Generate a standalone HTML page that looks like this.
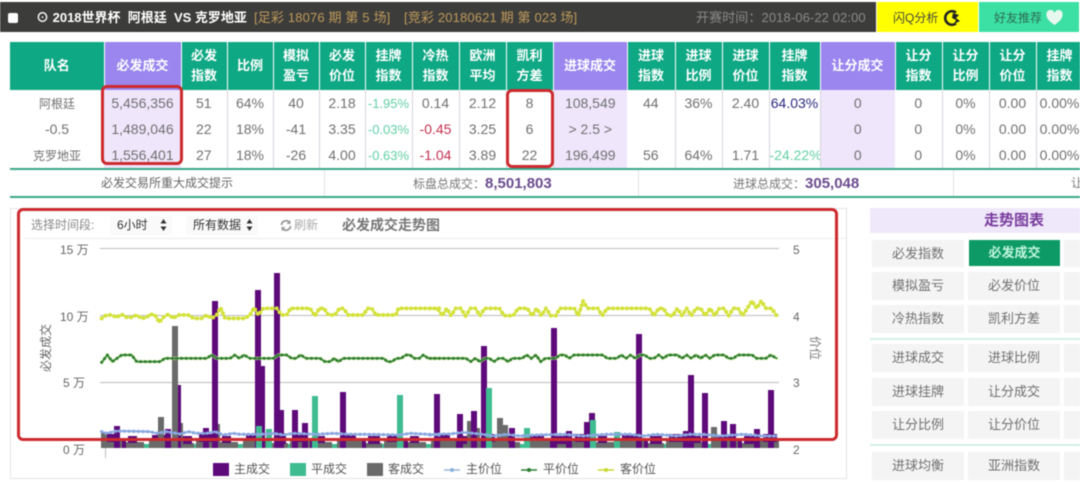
<!DOCTYPE html>
<html><head><meta charset="utf-8">
<style>
html,body{margin:0;padding:0;background:#fff}
#r{position:relative;width:1080px;height:482px;overflow:hidden;background:#fff;font-family:"Liberation Sans","Noto Sans CJK SC",sans-serif;filter:blur(.4px)}
.a{position:absolute;white-space:nowrap}
.b{position:absolute;box-sizing:border-box}
table{position:absolute;left:10px;top:42px;border-collapse:collapse;table-layout:fixed;width:1073px}
th{height:48px;padding:0;background:#0fa884;color:#fff;font-size:13px;line-height:20px;font-weight:bold;border-right:1px solid #fff;text-align:center}
th.p{background:#9a86ee}
td{height:26px;padding:0;font-size:14px;color:#707070;text-align:center;border-right:1px solid #d5d5dd;white-space:nowrap;overflow:hidden}
td.n{border-right:0;font-size:12px}
td.l{background:#efe6fb;border-right:0}
.g{color:#62cfa6;font-size:13px}.d{color:#c33050}.v{color:#2b2a80}
.btn{position:absolute;background:#f4f4f4;color:#707070;font-size:13px;text-align:center;box-sizing:border-box}
.rb{position:absolute;box-sizing:border-box;border:3px solid #cc2a2e;border-radius:6px}
</style></head><body><div id="r">

<!-- top bar -->
<div class="b" style="left:0;top:2px;width:876px;height:30px;background:#3c3c3a"></div>
<div class="b" style="left:8px;top:13px;width:10px;height:10px;background:#fff;border-radius:2px"></div>
<div class="a" style="left:36px;top:9px;font-size:13px;line-height:18px;font-weight:bold;color:#fff">⊙ 2018世界杯&nbsp; 阿根廷&nbsp; VS 克罗地亚</div>
<div class="a" style="left:254px;top:9px;font-size:13px;line-height:18px;color:#bf9a5c;letter-spacing:.15px">[足彩 18076 期 第 5 场]</div>
<div class="a" style="left:404px;top:9px;font-size:13px;line-height:18px;color:#bf9a5c;letter-spacing:.15px">[竞彩 20180621 期 第 023 场]</div>
<div class="a" style="left:696px;top:9px;font-size:13px;line-height:18px;color:#8a8a88;letter-spacing:.1px">开赛时间：2018-06-22 02:00</div>
<div class="b" style="left:877px;top:2px;width:101px;height:30px;background:#ffff00"></div>
<div class="a" style="left:893px;top:9px;font-size:12px;line-height:18px;color:#444">闪Q分析</div>
<svg class="a" style="left:943px;top:9px" width="18" height="18" viewBox="0 0 18 18"><path d="M13 3.500A6.800 6.800 0 1 0 13 14.500" fill="none" stroke="#222" stroke-width="2.600"/><path d="M10 4l6 2-3 3 4 3-6 3 2-4-4-2z" fill="#222"/></svg>
<div class="b" style="left:979px;top:2px;width:100px;height:30px;background:#3ce0a4"></div>
<div class="a" style="left:994px;top:9px;font-size:12px;line-height:18px;color:#2c6b55">好友推荐</div>
<svg class="a" style="left:1046px;top:10px" width="17" height="16" viewBox="0 0 17 16"><path d="M8.500 15C3 11 .5 8.500 .5 5A4 4 0 0 1 8.500 3A4 4 0 0 1 16.500 5C16.500 8.500 14 11 8.500 15z" fill="#e6f8f0"/></svg>

<!-- table -->
<table>
<colgroup><col style="width:94px"><col style="width:77px"><col style="width:46px"><col style="width:46px"><col style="width:46px"><col style="width:46px"><col style="width:47px"><col style="width:47px"><col style="width:47px"><col style="width:47px"><col style="width:74px"><col style="width:48px"><col style="width:47px"><col style="width:47px"><col style="width:51px"><col style="width:75px"><col style="width:47px"><col style="width:47px"><col style="width:47px"><col style="width:47px"></colgroup>
<tr><th>队名</th><th class="p">必发成交</th><th>必发<br>指数</th><th>比例</th><th>模拟<br>盈亏</th><th>必发<br>价位</th><th>挂牌<br>指数</th><th>冷热<br>指数</th><th>欧洲<br>平均</th><th>凯利<br>方差</th><th class="p">进球成交</th><th>进球<br>指数</th><th>进球<br>比例</th><th>进球<br>价位</th><th>挂牌<br>指数</th><th class="p">让分成交</th><th>让分<br>指数</th><th>让分<br>比例</th><th>让分<br>价位</th><th>挂牌<br>指数</th></tr>
<tr><td class="n">阿根廷</td><td class="l">5,456,356</td><td>51</td><td>64%</td><td>40</td><td>2.18</td><td class="g">-1.95%</td><td>0.14</td><td>2.12</td><td>8</td><td class="l">108,549</td><td>44</td><td>36%</td><td>2.40</td><td class="v">64.03%</td><td class="l">0</td><td>0</td><td>0%</td><td>0.00</td><td>0.00%</td></tr>
<tr><td class="n" style="font-size:14px">-0.5</td><td class="l">1,489,046</td><td>22</td><td>18%</td><td>-41</td><td>3.35</td><td class="g">-0.03%</td><td class="d">-0.45</td><td>3.25</td><td>6</td><td class="l">&gt; 2.5 &gt;</td><td></td><td></td><td></td><td></td><td class="l">0</td><td>0</td><td>0%</td><td>0.00</td><td>0.00%</td></tr>
<tr><td class="n">克罗地亚</td><td class="l">1,556,401</td><td>27</td><td>18%</td><td>-26</td><td>4.00</td><td class="g">-0.63%</td><td class="d">-1.04</td><td>3.89</td><td>22</td><td class="l">196,499</td><td>56</td><td>64%</td><td>1.71</td><td class="g" style="font-size:14px">-24.22%</td><td class="l">0</td><td>0</td><td>0%</td><td>0.00</td><td>0.00%</td></tr>
</table>

<!-- summary -->
<div class="b" style="left:10px;top:168px;width:1070px;height:2px;background:#38a888"></div>
<div class="b" style="left:10px;top:196px;width:1070px;height:2px;background:#38a888"></div>
<div class="b" style="left:324px;top:170px;width:1px;height:26px;background:#e2e2e2"></div>
<div class="b" style="left:638px;top:170px;width:1px;height:26px;background:#e2e2e2"></div>
<div class="b" style="left:953px;top:170px;width:1px;height:26px;background:#e2e2e2"></div>
<div class="a" style="left:101px;top:175px;font-size:12px;line-height:17px;color:#666">必发交易所重大成交提示</div>
<div class="a" style="left:413px;top:175px;font-size:12px;line-height:17px;color:#777">标盘总成交：<b style="font-size:15px;color:#6b4c8e">8,501,803</b></div>
<div class="a" style="left:733px;top:175px;font-size:12px;line-height:17px;color:#777">进球总成交：<b style="font-size:15px;color:#6b4c8e">305,048</b></div>
<div class="a" style="left:1071px;top:175px;font-size:12px;line-height:17px;color:#777">让分总成交</div>

<!-- chart panel -->
<div class="b" style="left:10px;top:208px;width:837px;height:271px;border:1px solid #e4e4e4"></div>
<div class="b" style="left:24px;top:238px;width:822px;height:1px;background:#ececec"></div>
<div class="b" style="left:110px;top:216px;width:62px;height:19px;background:#fafafa;border-radius:3px"></div>
<div class="b" style="left:186px;top:216px;width:72px;height:19px;background:#fafafa;border-radius:3px"></div>
<div class="a" style="left:31px;top:217px;font-size:12px;line-height:17px;color:#888">选择时间段:</div>
<div class="a" style="left:117px;top:217px;font-size:12px;line-height:17px;color:#333">6小时</div>
<svg class="a" style="left:160px;top:219px" width="7" height="12" viewBox="0 0 7 12"><path d="M3.500 0L6.500 4.500H.5zM3.500 12L.5 7.500H6.500z" fill="#333"/></svg>
<div class="a" style="left:193px;top:217px;font-size:12px;line-height:17px;color:#333">所有数据</div>
<svg class="a" style="left:246px;top:219px" width="7" height="12" viewBox="0 0 7 12"><path d="M3.500 0L6.500 4.500H.5zM3.500 12L.5 7.500H6.500z" fill="#333"/></svg>
<svg class="a" style="left:280px;top:219px" width="12" height="13" viewBox="0 0 12 13"><path d="M1.500 6a4.500 4.500 0 0 1 8-2.500M10.500 7a4.500 4.500 0 0 1-8 2.500" fill="none" stroke="#999" stroke-width="1.800"/><path d="M10.500 1v4h-4zM1.500 12V8h4z" fill="#999"/></svg>
<div class="a" style="left:294px;top:217px;font-size:12px;line-height:17px;color:#aaa">刷新</div>
<div class="a" style="left:342px;top:216px;font-size:14px;line-height:18px;font-weight:bold;color:#777">必发成交走势图</div>

<div class="a" style="left:60px;top:242px;width:25px;text-align:right;font-size:12px;line-height:17px;color:#666">15 万</div>
<div class="a" style="left:60px;top:309px;width:25px;text-align:right;font-size:12px;line-height:17px;color:#666">10 万</div>
<div class="a" style="left:60px;top:375px;width:25px;text-align:right;font-size:12px;line-height:17px;color:#666">5 万</div>
<div class="a" style="left:60px;top:442px;width:25px;text-align:right;font-size:12px;line-height:17px;color:#666">0 万</div>
<div class="a" style="left:22px;top:340px;width:48px;text-align:center;font-size:12px;line-height:16px;color:#666;transform:rotate(-90deg)">必发成交</div>
<div class="a" style="left:793px;top:242px;font-size:12px;line-height:17px;color:#666">5</div>
<div class="a" style="left:793px;top:309px;font-size:12px;line-height:17px;color:#666">4</div>
<div class="a" style="left:793px;top:375px;font-size:12px;line-height:17px;color:#666">3</div>
<div class="a" style="left:793px;top:442px;font-size:12px;line-height:17px;color:#666">2</div>
<div class="a" style="left:801px;top:340px;width:28px;text-align:center;font-size:12px;line-height:16px;color:#777;transform:rotate(90deg)">价位</div>

<svg class="a" style="left:0;top:0" width="1080" height="482" viewBox="0 0 1080 482">
<defs>
<pattern id="c" x="102" y="430" width="94" height="18" patternUnits="userSpaceOnUse">
<path d="M0 10h20v8H0zM24 12h18v6H24zM47 10h25v8H47zM76 13h16v5H76z" fill="#6a6a6a"/>
<path d="M3 4h14v8H3zM26 6h9v7h-9zM50 5h16v6H50zM78 6h12v8H78zM20 8h4v10h-4zM72 11h4v7h-4z" fill="#5e0a78"/>
<path d="M42 14h5v4h-5zM92 14h2v4h-2z" fill="#3fbc90"/>
</pattern>
</defs>
<g stroke="#bdbdbd" stroke-width="1"><path d="M100 248.500H779M100 315.500H779M100 382.500H779M105.500 448V458" fill="none"/></g>
<rect x="102" y="430" width="677" height="18" fill="url(#c)"/>
<g fill="#6a6a6a">
<rect x="172" y="326" width="6" height="122"/><rect x="158" y="417" width="6" height="31"/><rect x="101" y="433" width="6" height="15"/><rect x="178" y="423" width="5" height="25"/><rect x="214" y="424" width="6" height="24"/>
<rect x="467" y="421" width="8" height="27"/><rect x="475" y="428" width="5" height="20"/><rect x="497" y="418" width="6" height="30"/><rect x="503" y="425" width="5" height="23"/><rect x="711" y="427" width="6" height="21"/>
</g>
<g fill="#5f0a7b">
<rect x="212" y="301" width="6" height="147"/><rect x="255" y="290" width="6" height="158"/><rect x="261" y="366" width="4" height="82"/><rect x="274" y="273" width="6" height="175"/><rect x="280" y="410" width="4" height="38"/><rect x="292" y="410" width="6" height="38"/><rect x="302" y="423" width="6" height="25"/><rect x="340" y="392" width="6" height="56"/><rect x="178" y="385" width="3" height="63"/><rect x="114" y="426" width="6" height="22"/><rect x="165" y="429" width="6" height="19"/><rect x="203" y="428" width="6" height="20"/>
<rect x="434" y="394" width="6" height="54"/><rect x="457" y="414" width="6" height="34"/><rect x="471" y="411" width="6" height="37"/><rect x="481" y="346" width="6" height="102"/><rect x="509" y="428" width="6" height="20"/><rect x="551" y="328" width="6" height="120"/><rect x="566" y="431" width="6" height="17"/><rect x="584" y="422" width="6" height="26"/><rect x="589" y="413" width="6" height="35"/><rect x="636" y="334" width="6" height="114"/><rect x="683" y="431" width="6" height="17"/><rect x="688" y="375" width="6" height="73"/><rect x="702" y="393" width="6" height="55"/><rect x="721" y="421" width="6" height="27"/><rect x="730" y="424" width="6" height="24"/><rect x="754" y="429" width="6" height="19"/><rect x="768" y="390" width="6" height="58"/>
</g>
<g fill="#3fbc90">
<rect x="312" y="396" width="6" height="52"/><rect x="397" y="395" width="6" height="53"/><rect x="256" y="426" width="6" height="22"/><rect x="266" y="429" width="6" height="19"/><rect x="486" y="388" width="6" height="60"/><rect x="524" y="428" width="6" height="20"/><rect x="590" y="420" width="6" height="28"/><rect x="614" y="432" width="6" height="16"/>
</g>
<g fill="none" stroke-linejoin="round" stroke-linecap="round">
<g transform="translate(0,200) scale(.33333)">
<polyline stroke="#c9d92e" stroke-width="5" points="305,355 320,345 335,345 350,352 365,343 380,352 395,352 410,345 425,355 440,352 450,343 465,345 478,367 492,350 505,343 520,355 535,345 565,345 580,355 605,355 620,345 635,355 650,345 662,323 675,355 735,355 750,345 762,323 775,345 790,325 830,325 845,345 860,345 872,325 930,325 945,348 958,325 972,325 985,345 1005,345 1018,325 1030,325 1045,345 1090,345 1103,325 1115,325 1128,345 1188,345 1195,325 1320,325"/>
<polyline stroke="#d4e23a" stroke-width="12" stroke-dasharray="0 14" points="305,355 320,345 335,345 350,352 365,343 380,352 395,352 410,345 425,355 440,352 450,343 465,345 478,367 492,350 505,343 520,355 535,345 565,345 580,355 605,355 620,345 635,355 650,345 662,323 675,355 735,355 750,345 762,323 775,345 790,325 830,325 845,345 860,345 872,325 930,325 945,348 958,325 972,325 985,345 1005,345 1018,325 1030,325 1045,345 1090,345 1103,325 1115,325 1128,345 1188,345 1195,325 1320,325"/>
<polyline stroke="#d8f0a0" stroke-width="11" opacity=".6" points="305,487 322,465 337,485 365,465 395,465 410,485 480,485 495,475 620,475 635,465 650,475 690,475 705,465 718,475 732,465 750,475 820,475 835,465 860,465 875,475 888,475 902,465 918,475 960,475 975,485 990,485 1003,475 1015,485 1030,475 1150,475 1163,485 1175,485 1190,475 1203,475 1217,465 1230,465 1243,475 1258,475 1270,465 1285,475 1320,475"/>
<polyline stroke="#2e7d32" stroke-width="5" points="305,487 322,465 337,485 365,465 395,465 410,485 480,485 495,475 620,475 635,465 650,475 690,475 705,465 718,475 732,465 750,475 820,475 835,465 860,465 875,475 888,475 902,465 918,475 960,475 975,485 990,485 1003,475 1015,485 1030,475 1150,475 1163,485 1175,485 1190,475 1203,475 1217,465 1230,465 1243,475 1258,475 1270,465 1285,475 1320,475"/>
<polyline stroke="#2e7d32" stroke-width="9" stroke-dasharray="0 14" points="305,487 322,465 337,485 365,465 395,465 410,485 480,485 495,475 620,475 635,465 650,475 690,475 705,465 718,475 732,465 750,475 820,475 835,465 860,465 875,475 888,475 902,465 918,475 960,475 975,485 990,485 1003,475 1015,485 1030,475 1150,475 1163,485 1175,485 1190,475 1203,475 1217,465 1230,465 1243,475 1258,475 1270,465 1285,475 1320,475"/>
<polyline stroke="#8aa8e0" stroke-width="6" points="305,695 320,700 350,693 450,695 470,700 500,695 540,702 565,695 590,700 620,700 645,695 670,705 700,700 720,703 780,703 820,700 850,705 880,700 950,703 1000,700 1050,703 1100,703 1200,705 1230,700 1320,705"/>
<polyline stroke="#8aa8e0" stroke-width="10" stroke-dasharray="0 14" points="305,695 320,700 350,693 450,695 470,700 500,695 540,702 565,695 590,700 620,700 645,695 670,705 700,700 720,703 780,703 820,700 850,705 880,700 950,703 1000,700 1050,703 1100,703 1200,705 1230,700 1320,705"/>
</g>
<g transform="translate(430,200) scale(.33333)">
<polyline stroke="#c9d92e" stroke-width="5" points="0,325 22,325 37,347 50,325 63,347 77,325 92,325 107,348 121,325 136,325 150,347 164,325 208,325 222,347 250,347 264,325 292,325 306,347 320,325 334,347 348,325 362,347 377,347 390,325 433,325 445,347 459,303 473,325 503,325 517,347 531,325 658,325 672,347 686,325 700,325 714,347 728,347 742,325 756,347 770,325 784,347 798,325 812,325 826,347 840,325 854,347 868,325 882,325 896,347 910,325 924,325 938,347 952,325 966,303 980,325 994,303 1008,325 1025,325 1040,347"/>
<polyline stroke="#d4e23a" stroke-width="12" stroke-dasharray="0 14" points="0,325 22,325 37,347 50,325 63,347 77,325 92,325 107,348 121,325 136,325 150,347 164,325 208,325 222,347 250,347 264,325 292,325 306,347 320,325 334,347 348,325 362,347 377,347 390,325 433,325 445,347 459,303 473,325 503,325 517,347 531,325 658,325 672,347 686,325 700,325 714,347 728,347 742,325 756,347 770,325 784,347 798,325 812,325 826,347 840,325 854,347 868,325 882,325 896,347 910,325 924,325 938,347 952,325 966,303 980,325 994,303 1008,325 1025,325 1040,347"/>
<polyline stroke="#d8f0a0" stroke-width="11" opacity=".6" points="0,475 108,475 122,485 136,475 150,485 164,475 178,475 192,485 206,475 220,475 234,485 248,475 276,475 290,465 304,475 318,465 332,485 346,475 376,475 390,465 404,465 418,475 432,465 518,465 532,475 560,475 574,465 588,475 602,465 616,475 630,465 644,465 658,475 672,475 686,465 700,475 714,465 742,465 756,475 770,465 784,475 798,465 812,475 826,465 840,475 854,465 882,465 896,475 910,475 924,465 966,465 980,475 1008,475 1022,465 1040,475"/>
<polyline stroke="#2e7d32" stroke-width="5" points="0,475 108,475 122,485 136,475 150,485 164,475 178,475 192,485 206,475 220,475 234,485 248,475 276,475 290,465 304,475 318,465 332,485 346,475 376,475 390,465 404,465 418,475 432,465 518,465 532,475 560,475 574,465 588,475 602,465 616,475 630,465 644,465 658,475 672,475 686,465 700,475 714,465 742,465 756,475 770,465 784,475 798,465 812,475 826,465 840,475 854,465 882,465 896,475 910,475 924,465 966,465 980,475 1008,475 1022,465 1040,475"/>
<polyline stroke="#2e7d32" stroke-width="9" stroke-dasharray="0 14" points="0,475 108,475 122,485 136,475 150,485 164,475 178,475 192,485 206,475 220,475 234,485 248,475 276,475 290,465 304,475 318,465 332,485 346,475 376,475 390,465 404,465 418,475 432,465 518,465 532,475 560,475 574,465 588,475 602,465 616,475 630,465 644,465 658,475 672,475 686,465 700,475 714,465 742,465 756,475 770,465 784,475 798,465 812,475 826,465 840,475 854,465 882,465 896,475 910,475 924,465 966,465 980,475 1008,475 1022,465 1040,475"/>
<polyline stroke="#8aa8e0" stroke-width="6" points="0,705 20,702 60,702 100,697 150,702 190,708 230,703 270,708 320,705 400,703 460,708 530,703 600,703 640,708 680,703 740,708 780,703 820,703 870,708 940,703 1000,708 1040,708"/>
<polyline stroke="#8aa8e0" stroke-width="10" stroke-dasharray="0 14" points="0,705 20,702 60,702 100,697 150,702 190,708 230,703 270,708 320,705 400,703 460,708 530,703 600,703 640,708 680,703 740,708 780,703 820,703 870,708 940,703 1000,708 1040,708"/>
</g>
</g>
<!-- legend -->
<rect x="213" y="463" width="16" height="13" fill="#5f0a7b"/><rect x="290" y="463" width="16" height="13" fill="#3fbc90"/><rect x="367" y="463" width="16" height="13" fill="#6a6a6a"/>
<path d="M444 470h16" stroke="#9ab8d8" stroke-width="1.500"/><circle cx="452" cy="470" r="2" fill="#8ab0de"/>
<path d="M521 470h16" stroke="#2e7d32" stroke-width="1.500"/><circle cx="529" cy="470" r="2" fill="#2e7d32"/>
<path d="M598 470h16" stroke="#c9d92e" stroke-width="1.500"/><circle cx="606" cy="470" r="2" fill="#c9d92e"/>
</svg>
<div class="a" style="left:234px;top:461px;font-size:12px;line-height:17px;color:#555">主成交</div>
<div class="a" style="left:311px;top:461px;font-size:12px;line-height:17px;color:#555">平成交</div>
<div class="a" style="left:388px;top:461px;font-size:12px;line-height:17px;color:#555">客成交</div>
<div class="a" style="left:466px;top:461px;font-size:12px;line-height:17px;color:#555">主价位</div>
<div class="a" style="left:543px;top:461px;font-size:12px;line-height:17px;color:#555">平价位</div>
<div class="a" style="left:620px;top:461px;font-size:12px;line-height:17px;color:#555">客价位</div>

<!-- right panel -->
<div class="b" style="left:870px;top:208px;width:210px;height:25px;background:#efe7fa"></div>
<div class="a" style="left:984px;top:212px;font-size:15px;line-height:18px;font-weight:bold;color:#7a3d9e">走势图表</div>
<div class="btn" style="left:872px;top:240px;width:92px;height:27px;line-height:27px">必发指数</div>
<div class="btn" style="left:969px;top:240px;width:91px;height:26px;line-height:26px;background:#0e9a66;color:#c0f5dc;font-weight:bold">必发成交</div>
<div class="btn" style="left:1064px;top:240px;width:16px;height:27px"></div>
<div class="btn" style="left:872px;top:272px;width:92px;height:28px;line-height:28px">模拟盈亏</div>
<div class="btn" style="left:968px;top:272px;width:92px;height:28px;line-height:28px">必发价位</div>
<div class="btn" style="left:1064px;top:272px;width:16px;height:28px"></div>
<div class="btn" style="left:872px;top:305px;width:92px;height:28px;line-height:28px">冷热指数</div>
<div class="btn" style="left:968px;top:305px;width:92px;height:28px;line-height:28px">凯利方差</div>
<div class="btn" style="left:1064px;top:305px;width:16px;height:28px"></div>
<div class="b" style="left:870px;top:338px;width:210px;height:2px;background:#d4efe4"></div>
<div class="btn" style="left:872px;top:344px;width:92px;height:28px;line-height:28px">进球成交</div>
<div class="btn" style="left:968px;top:344px;width:92px;height:28px;line-height:28px">进球比例</div>
<div class="btn" style="left:1064px;top:344px;width:16px;height:28px"></div>
<div class="btn" style="left:872px;top:378px;width:92px;height:28px;line-height:28px">进球挂牌</div>
<div class="btn" style="left:968px;top:378px;width:92px;height:28px;line-height:28px">让分成交</div>
<div class="btn" style="left:1064px;top:378px;width:16px;height:28px"></div>
<div class="btn" style="left:872px;top:411px;width:92px;height:28px;line-height:28px">让分比例</div>
<div class="btn" style="left:968px;top:411px;width:92px;height:28px;line-height:28px">让分价位</div>
<div class="btn" style="left:1064px;top:411px;width:16px;height:28px"></div>
<div class="b" style="left:870px;top:444px;width:210px;height:2px;background:#d4efe4"></div>
<div class="btn" style="left:872px;top:452px;width:92px;height:28px;line-height:28px">进球均衡</div>
<div class="btn" style="left:968px;top:452px;width:92px;height:28px;line-height:28px">亚洲指数</div>
<div class="btn" style="left:1064px;top:452px;width:16px;height:28px"></div>

<!-- red annotation boxes -->
<div class="rb" style="left:101px;top:85px;width:82px;height:80px"></div>
<div class="rb" style="left:506px;top:89px;width:48px;height:79px"></div>
<div class="rb" style="left:17px;top:208px;width:821px;height:233px"></div>

</div></body></html>
